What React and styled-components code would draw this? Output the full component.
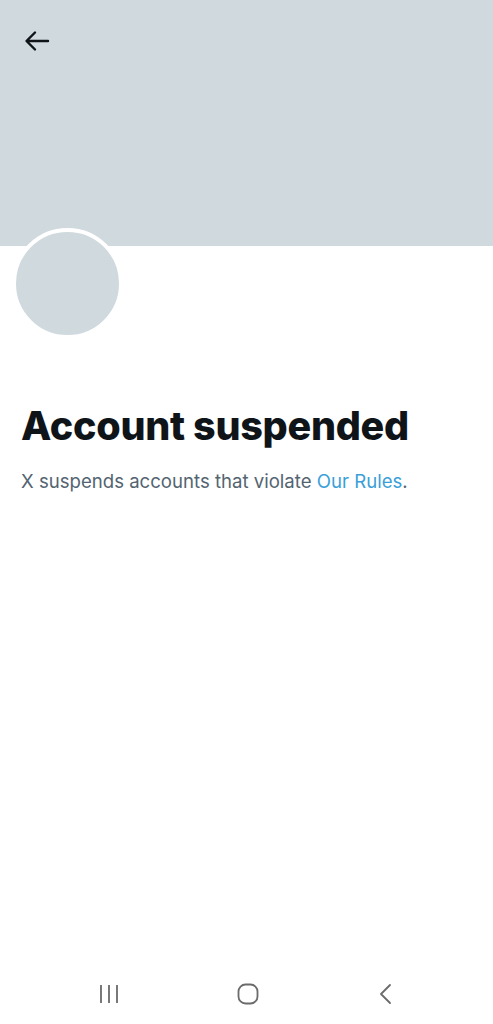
import React from "react";
import styled, { createGlobalStyle } from "styled-components";

const Global = createGlobalStyle`
  html, body {
    margin: 0;
    padding: 0;
    background: #ffffff;
  }
  body {
    font-family: Inter, "Liberation Sans", sans-serif;
  }
`;

const Page = styled.div`
  width: 493px;
  height: 1024px;
  display: flex;
  flex-direction: column;
  background: #ffffff;
  overflow: hidden;
`;

const Banner = styled.div`
  height: 246px;
  background: #cfd9de;
  padding: 28px 0 0 22px;
  box-sizing: border-box;
  flex-shrink: 0;
`;

const BackButton = styled.button`
  width: 30px;
  height: 26px;
  padding: 0;
  border: none;
  background: none;
  display: flex;
  align-items: center;
  justify-content: center;
`;

const Avatar = styled.div`
  width: 103px;
  height: 103px;
  margin: -18px 0 0 12px;
  border-radius: 50%;
  border: 4px solid #ffffff;
  background: #cfd9de;
  flex-shrink: 0;
`;

const Content = styled.div`
  padding: 63px 21px 0;
  flex: 1;
`;

const Title = styled.h1`
  margin: 0;
  font-size: 39.5px;
  font-weight: 800;
  letter-spacing: -0.3px;
  line-height: 48px;
  color: #0f1419;
`;

const Message = styled.p`
  margin: 19px 0 0;
  font-size: 18.6px;
  line-height: 24px;
  color: #536471;
`;

const Link = styled.span`
  color: #3a9fd9;
`;

const NavBar = styled.div`
  height: 60px;
  display: flex;
  align-items: center;
  justify-content: space-between;
  padding: 0 93px 0 96px;
  flex-shrink: 0;
`;

const NavIcon = styled.div`
  width: 28px;
  height: 28px;
  display: flex;
  align-items: center;
  justify-content: center;
`;

function App() {
  return (
    <>
      <Global />
      <Page>
        <Banner>
          <BackButton aria-label="Back">
            <svg width="26" height="22" viewBox="0 0 26 22" fill="none">
              <path
                d="M24 11H3M11 2.5L2.5 11L11 19.5"
                stroke="#0f1419"
                strokeWidth="2.4"
                strokeLinecap="round"
                strokeLinejoin="round"
              />
            </svg>
          </BackButton>
        </Banner>
        <Avatar />
        <Content>
          <Title>Account suspended</Title>
          <Message>
            X suspends accounts that violate <Link>Our Rules</Link>.
          </Message>
        </Content>
        <NavBar>
          <NavIcon>
            <svg width="24" height="22" viewBox="0 0 24 22" fill="none">
              <path d="M3 2v18M11 2v18M19 2v18" stroke="#6b6b6b" strokeWidth="1.8" />
            </svg>
          </NavIcon>
          <NavIcon>
            <svg width="24" height="24" viewBox="0 0 24 24" fill="none">
              <rect x="2.5" y="2.5" width="19" height="19" rx="7" stroke="#6b6b6b" strokeWidth="1.8" />
            </svg>
          </NavIcon>
          <NavIcon>
            <svg width="24" height="24" viewBox="0 0 24 24" fill="none">
              <path d="M16 3L7 12L16 21" stroke="#6b6b6b" strokeWidth="1.8" strokeLinecap="round" strokeLinejoin="round" />
            </svg>
          </NavIcon>
        </NavBar>
      </Page>
    </>
  );
}

export default App;
